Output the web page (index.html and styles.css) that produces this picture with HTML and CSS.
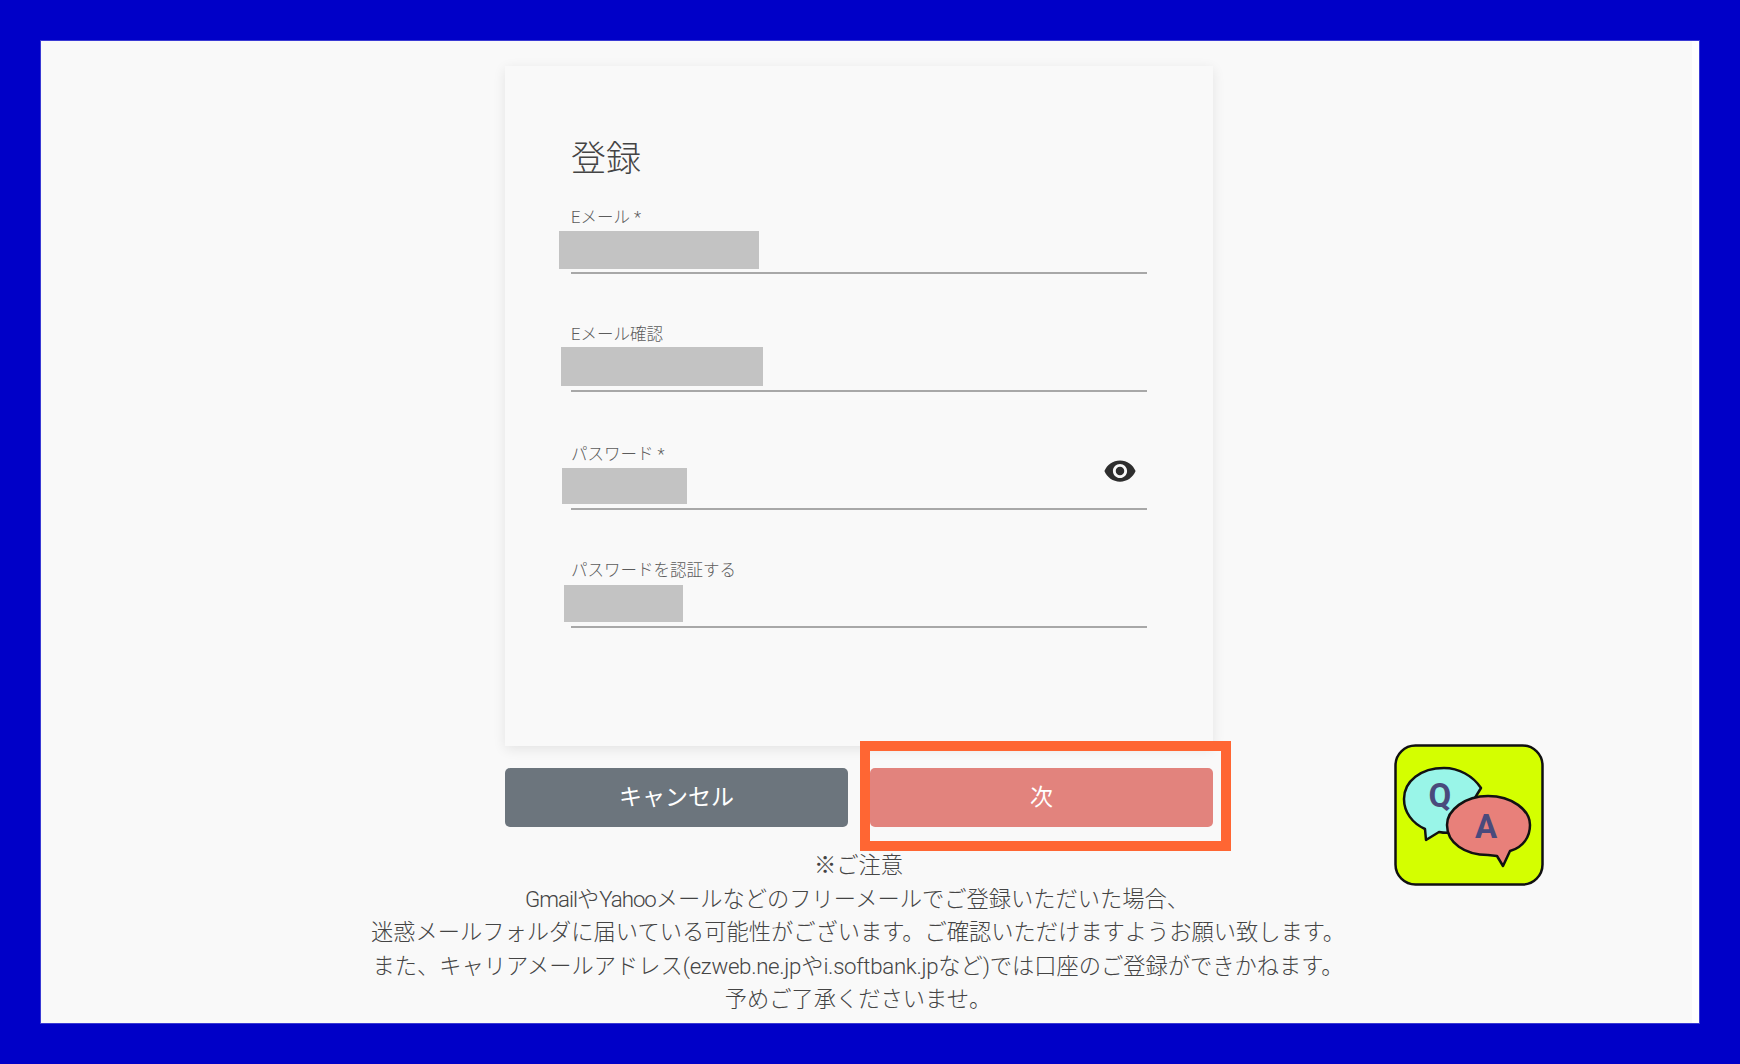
FILE: index.html
```html
<!DOCTYPE html>
<html lang="ja">
<head>
    <meta charset="UTF-8">
    <meta name="viewport" content="width=device-width, initial-scale=1.0">
    <title>登録</title>
    <link rel="stylesheet" href="styles.css">
</head>
<body>
    <div class="screen">
        <div class="column">
            <div class="card">
                <h2>登録</h2>
                <div class="field field-email">
                    <label>Eメール *</label>
                    <div class="masked"></div>
                </div>
                <div class="field field-confirm">
                    <label>Eメール確認</label>
                    <div class="masked"></div>
                </div>
                <div class="field field-password">
                    <label>パスワード *</label>
                    <div class="masked"></div>
                    <svg class="eye" viewBox="0 0 24 24">
                        <path d="M12 4.5C7 4.5 2.73 7.61 1 12c1.73 4.39 6 7.5 11 7.5s9.27-3.11 11-7.5c-1.73-4.39-6-7.5-11-7.5zM12 17c-2.76 0-5-2.24-5-5s2.24-5 5-5 5 2.24 5 5-2.24 5-5 5zm0-8c-1.66 0-3 1.34-3 3s1.34 3 3 3 3-1.34 3-3-1.34-3-3-3z"/>
                    </svg>
                </div>
                <div class="field field-repeat">
                    <label>パスワードを認証する</label>
                    <div class="masked"></div>
                </div>
            </div>
            <div class="buttons">
                <button class="btn btn-cancel">キャンセル</button>
                <button class="btn btn-next">次<span class="frame"></span></button>
            </div>
        </div>
        <div class="notes">
            <p class="note-head">※ご注意</p>
            <p class="note-first"><span class="latin">Gmail</span>や<span class="latin">Yahoo</span>メールなどのフリーメールでご登録いただいた場合、</p>
            <p>迷惑メールフォルダに届いている可能性がございます。ご確認いただけますようお願い致します。</p>
            <p>また、キャリアメールアドレス<span class="latin">(ezweb.ne.jp</span>や<span class="latin">i.softbank.jp</span>など<span class="latin">)</span>では口座のご登録ができかねます。</p>
            <p>予めご了承くださいませ。</p>
        </div>
        <svg class="qa" viewBox="0 0 150 142">
            <rect x="1.5" y="1.5" width="147" height="139" rx="20" fill="#d4ff00" stroke="#111" stroke-width="2.5"/>
            <path d="M87 44C79 32 65 24 50 24C27 24 10 37 10 55C10 68 18 79 31 85L32 96L45 88C50 89 56 89 60 88Z" fill="#99f5e8" stroke="#111" stroke-width="2.5" stroke-linejoin="round"/>
            <text x="46" y="63" class="qa-letter">Q</text>
            <path d="M94 52C71 52 53 66 53 81C53 99 71 111 94 111L103 112L109 122L116 107C130 103 136 92 136 81C136 66 118 52 94 52Z" fill="#e8807a" stroke="#111" stroke-width="2.5" stroke-linejoin="round"/>
            <text x="92" y="94" class="qa-letter">A</text>
        </svg>
    </div>
</body>
</html>
```

FILE: styles.css
```css
* {
    box-sizing: border-box;
}
body {
    margin: 0;
    padding: 41px;
    height: 1064px;
    overflow: hidden;
    background: #0000c8;
    font-family: Roboto, 'Noto Sans CJK JP', sans-serif;
    font-weight: 300;
    color: #444;
}
.screen {
    position: relative;
    height: 982px;
    overflow: hidden;
    background: #f9f9f9;
    box-shadow: 0 0 0 1px #3a3ad4;
}
/* scrollbar track on the right edge */
.screen::after {
    content: '';
    position: absolute;
    top: 0;
    right: 0;
    bottom: 0;
    width: 7px;
    background: #fff;
}
.column {
    width: 708px;
    margin-left: 464px;
    padding-top: 25px;
}
.card {
    height: 680px;
    padding: 74px 66px 0;
    background: #f9f9f9;
    box-shadow: 0 3px 12px rgba(0, 0, 0, 0.09);
}
h2 {
    margin: 0 0 28px;
    font-size: 35px;
    line-height: 40px;
    font-weight: 300;
    color: #444;
}
.field {
    position: relative;
    border-bottom: 2px solid #a8a8a8;
}
label {
    display: block;
    font-size: 16.5px;
    line-height: 20px;
    color: #5c5c5c;
}
.masked {
    background: #c3c3c3;
}
.field-email {
    margin-bottom: 51px;
}
.field-email .masked {
    width: 200px;
    height: 38px;
    margin: 3px 0 3px -12px;
}
.field-confirm {
    margin-bottom: 53px;
}
.field-confirm .masked {
    width: 202px;
    height: 39px;
    margin: 2px 0 4px -10px;
}
.field-password {
    margin-bottom: 51px;
}
.field-password .masked {
    width: 125px;
    height: 36px;
    margin: 3px 0 4px -9px;
}
.field-repeat .masked {
    width: 119px;
    height: 37px;
    margin: 4px 0 4px -7px;
}
.eye {
    position: absolute;
    right: 10px;
    top: 9px;
    width: 34px;
    height: 34px;
    fill: #2e2e2e;
}
.buttons {
    display: flex;
    gap: 22px;
    margin-top: 22px;
}
.btn {
    position: relative;
    flex: 1;
    height: 59px;
    padding: 0 0 5px;
    border: none;
    border-radius: 5px;
    font-family: inherit;
    font-size: 23px;
    font-weight: 400;
    color: #fff;
}
.btn-cancel {
    background: #6c757d;
}
.btn-next {
    background: #e2837d;
}
.frame {
    position: absolute;
    top: -27px;
    right: -18px;
    bottom: -24px;
    left: -10px;
    border: 10px solid #ff6633;
}
.notes {
    width: 1000px;
    margin: 22px 0 0 317px;
    text-align: center;
    font-size: 22.25px;
    line-height: 33.5px;
}
.notes p {
    margin: 0;
}
.note-head {
    padding-left: 1px;
}
.note-first {
    padding-right: 2px;
}
.latin {
    letter-spacing: -0.3px;
}
.note-first .latin {
    letter-spacing: -1px;
}
.qa {
    position: absolute;
    left: 1353px;
    top: 703px;
    width: 150px;
    height: 142px;
}
.qa-letter {
    font-family: Roboto, sans-serif;
    font-size: 33px;
    font-weight: 700;
    fill: #4a4a7c;
    text-anchor: middle;
}
```
